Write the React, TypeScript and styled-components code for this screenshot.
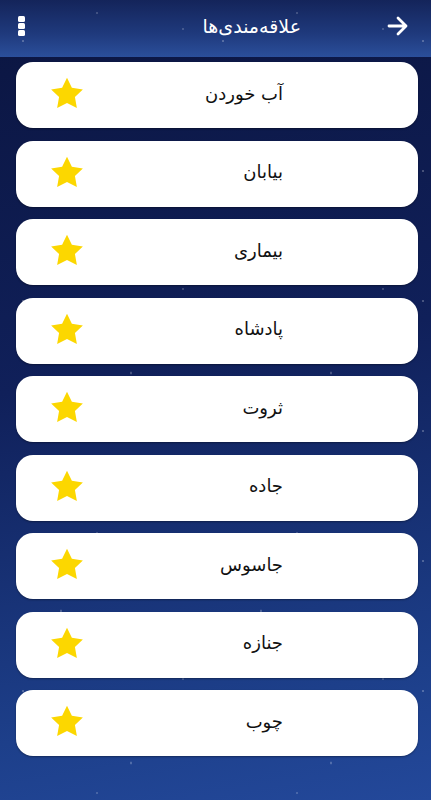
import React from "react";
import styled, { createGlobalStyle } from "styled-components";

const items = [
  "آب خوردن",
  "بیابان",
  "بیماری",
  "پادشاه",
  "ثروت",
  "جاده",
  "جاسوس",
  "جنازه",
  "چوب",
];

const GlobalStyle = createGlobalStyle`
  html, body {
    margin: 0;
    padding: 0;
    background: #0c1742;
  }
  * {
    box-sizing: border-box;
  }
`;

const starDots = `
  radial-gradient(1px 1px at 23px 41px, rgba(255,255,255,0.8), transparent),
  radial-gradient(1px 1px at 97px 13px, rgba(255,255,255,0.6), transparent),
  radial-gradient(1px 1px at 151px 67px, rgba(255,255,255,0.7), transparent),
  radial-gradient(1px 2px at 61px 91px, rgba(255,255,255,0.5), transparent),
  radial-gradient(1px 1px at 183px 29px, rgba(255,255,255,0.6), transparent),
  radial-gradient(1px 2px at 131px 113px, rgba(255,255,255,0.5), transparent)
`;

const dotSizes = "200px 130px, 200px 130px, 200px 130px, 200px 130px, 200px 130px, 200px 130px, 100% 100%";

const Screen = styled.div`
  width: 431px;
  height: 800px;
  overflow: hidden;
  display: flex;
  flex-direction: column;
  font-family: "DejaVu Sans", "Noto Sans", sans-serif;
  background: ${starDots}, linear-gradient(170deg, #0b1540 0%, #10205a 45%, #1d3f8a 85%, #23489a 100%);
  background-size: ${dotSizes};
`;

const Header = styled.header`
  height: 57px;
  flex-shrink: 0;
  display: flex;
  align-items: center;
  padding: 0 22px 5px 16px;
  background: ${starDots}, linear-gradient(180deg, #14245a 0%, #1f3a7d 60%, #2b4f9b 100%);
  background-size: ${dotSizes};
`;

const MenuDots = styled.div`
  display: flex;
  flex-direction: column;
  gap: 1px;
  padding-left: 2px;

  span {
    width: 7px;
    height: 6px;
    border-radius: 1.5px;
    background: #fff;
  }
`;

const Title = styled.h1`
  margin: 0 86px 0 auto;
  color: #fff;
  font-size: 19px;
  font-weight: normal;
  direction: rtl;
`;

const List = styled.main`
  display: flex;
  flex-direction: column;
  gap: 12.5px;
  padding: 5px 13px 0 16px;
`;

const Card = styled.div`
  height: 66px;
  background: #fff;
  border-radius: 17px;
  display: flex;
  align-items: center;
  justify-content: space-between;
  padding: 0 135px 4px 34px;
  box-shadow: 0 1px 2px rgba(0, 0, 0, 0.35);
`;

const Label = styled.span`
  direction: rtl;
  color: #111;
  font-size: 18px;
`;

const Star = () => (
  <svg width="34" height="32" viewBox="0 0 24 23">
    <path
      d="M12 0.6l3.5 7.2 7.9 1.1-5.7 5.5 1.4 7.9L12 18.6l-7.1 3.7 1.4-7.9L0.6 8.9l7.9-1.1z"
      fill="#fcd700"
    />
  </svg>
);

const Arrow = () => (
  <svg width="22" height="20" viewBox="0 0 22 20">
    <path
      d="M2 10h17M11 2l8 8-8 8"
      fill="none"
      stroke="#fff"
      strokeWidth="2.8"
      strokeLinecap="round"
      strokeLinejoin="round"
    />
  </svg>
);

export default function App() {
  return (
    <>
      <GlobalStyle />
      <Screen>
        <Header>
          <MenuDots>
            <span />
            <span />
            <span />
          </MenuDots>
          <Title>علاقه‌مندی‌ها</Title>
          <Arrow />
        </Header>
        <List>
          {items.map((name) => (
            <Card key={name}>
              <Star />
              <Label>{name}</Label>
            </Card>
          ))}
        </List>
      </Screen>
    </>
  );
}
